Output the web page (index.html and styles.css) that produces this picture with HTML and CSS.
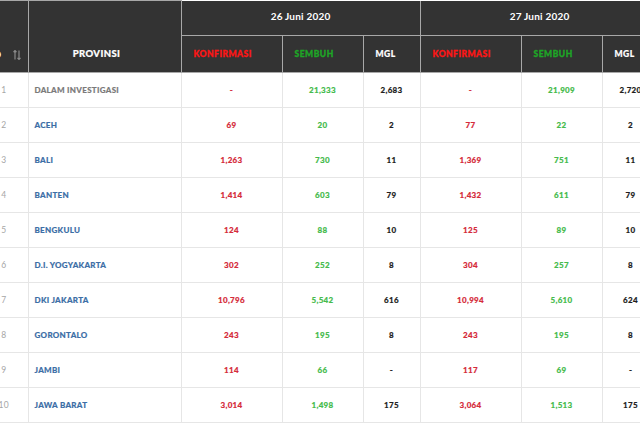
FILE: index.html
```html
<!DOCTYPE html>
<html lang="id">
<head>
<meta charset="utf-8">
<title>Data Provinsi</title>
<link rel="stylesheet" href="styles.css">
</head>
<body>
<div class="wrap">
<table class="data">
  <colgroup>
    <col class="c-no"><col class="c-prov">
    <col class="c-k"><col class="c-s"><col class="c-m">
    <col class="c-k"><col class="c-s"><col class="c-m">
  </colgroup>
  <thead>
    <tr class="h1">
      <th rowspan="2" class="th-no"><span class="no-lbl">NO</span>
        <svg class="sort" width="8" height="10" viewBox="0 0 8 10"><path d="M2 0.5v9M0.5 2.2L2 0.5 3.5 2.2M6 0.5v9M4.5 7.8L6 9.5 7.5 7.8" fill="none" stroke="#8a8a8a" stroke-width="1.2"/></svg>
      </th>
      <th rowspan="2" class="th-prov">PROVINSI</th>
      <th colspan="3" class="th-date">26 Juni 2020</th>
      <th colspan="3" class="th-date">27 Juni 2020</th>
    </tr>
    <tr class="h2">
      <th class="lbl red">KONFIRMASI</th><th class="lbl green">SEMBUH</th><th class="lbl white">MGL</th>
      <th class="lbl red">KONFIRMASI</th><th class="lbl green">SEMBUH</th><th class="lbl white">MGL</th>
    </tr>
  </thead>
  <tbody>
    <tr><td class="no">1</td><td class="prov grey">DALAM INVESTIGASI</td><td class="num k">-</td><td class="num s">21,333</td><td class="num m">2,683</td><td class="num k">-</td><td class="num s">21,909</td><td class="num m">2,720</td></tr>
    <tr><td class="no">2</td><td class="prov">ACEH</td><td class="num k">69</td><td class="num s">20</td><td class="num m">2</td><td class="num k">77</td><td class="num s">22</td><td class="num m">2</td></tr>
    <tr><td class="no">3</td><td class="prov">BALI</td><td class="num k">1,263</td><td class="num s">730</td><td class="num m">11</td><td class="num k">1,369</td><td class="num s">751</td><td class="num m">11</td></tr>
    <tr><td class="no">4</td><td class="prov">BANTEN</td><td class="num k">1,414</td><td class="num s">603</td><td class="num m">79</td><td class="num k">1,432</td><td class="num s">611</td><td class="num m">79</td></tr>
    <tr><td class="no">5</td><td class="prov">BENGKULU</td><td class="num k">124</td><td class="num s">88</td><td class="num m">10</td><td class="num k">125</td><td class="num s">89</td><td class="num m">10</td></tr>
    <tr><td class="no">6</td><td class="prov">D.I. YOGYAKARTA</td><td class="num k">302</td><td class="num s">252</td><td class="num m">8</td><td class="num k">304</td><td class="num s">257</td><td class="num m">8</td></tr>
    <tr><td class="no">7</td><td class="prov">DKI JAKARTA</td><td class="num k">10,796</td><td class="num s">5,542</td><td class="num m">616</td><td class="num k">10,994</td><td class="num s">5,610</td><td class="num m">624</td></tr>
    <tr><td class="no">8</td><td class="prov">GORONTALO</td><td class="num k">243</td><td class="num s">195</td><td class="num m">8</td><td class="num k">243</td><td class="num s">195</td><td class="num m">8</td></tr>
    <tr><td class="no">9</td><td class="prov">JAMBI</td><td class="num k">114</td><td class="num s">66</td><td class="num m">-</td><td class="num k">117</td><td class="num s">69</td><td class="num m">-</td></tr>
    <tr><td class="no">10</td><td class="prov">JAWA BARAT</td><td class="num k">3,014</td><td class="num s">1,498</td><td class="num m">175</td><td class="num k">3,064</td><td class="num s">1,513</td><td class="num m">175</td></tr>
  </tbody>
</table>
</div>
</body>
</html>
```
FILE: styles.css
```css
html, body {
  margin: 0;
  padding: 0;
  background: #ffffff;
}
body {
  width: 640px;
  height: 426px;
  overflow: hidden;
  font-family: Lato, "Liberation Sans", sans-serif;
}
.wrap {
  margin-left: -20px;
  width: 700px;
}
.data {
  border-collapse: collapse;
  table-layout: fixed;
  width: 679px;
}
.c-no { width: 48px; }
.c-prov { width: 153px; }
.c-k { width: 101px; }
.c-s { width: 81px; }
.c-m { width: 57px; }

thead th {
  background: #333333;
  border: 1px solid #a8a8a8;
  color: #ffffff;
  font-weight: 900;
  padding: 0;
}
.h1 { height: 35px; }
.h2 { height: 37px; }
.th-no {
  text-align: right;
  vertical-align: bottom;
  padding: 0 7px 12px 0;
  border-left: none;
  font-size: 9px;
  letter-spacing: 0.6px;
  white-space: nowrap;
}
.th-no .no-lbl { margin-right: 8px; }
.sort { vertical-align: -2px; }
.th-prov {
  vertical-align: bottom;
  padding: 0 16px 13px 0;
  font-size: 9.5px;
  letter-spacing: 0.4px;
  text-align: center;
  -webkit-text-stroke: 0.2px #ffffff;
}
.th-date {
  font-size: 10px;
  font-weight: 700;
  letter-spacing: 0.2px;
  text-align: center;
  vertical-align: middle;
  padding-bottom: 3px;
  border-top: none;
}
.lbl {
  text-align: left;
  padding-left: 12px;
  font-size: 8.5px;
  letter-spacing: 0.5px;
}
.lbl.red { color: #ff1515; -webkit-text-stroke: 0.3px #ff1515; }
.lbl.green { color: #1ea626; -webkit-text-stroke: 0.3px #1ea626; }
.lbl.white { color: #ffffff; -webkit-text-stroke: 0.2px #ffffff; }

tbody tr { height: 35px; }
tbody td {
  border: 1px solid #e6e6e6;
  padding: 0;
  font-size: 8px;
  font-weight: 900;
  letter-spacing: 0.3px;
  -webkit-text-stroke: 0.15px currentColor;
}
tbody tr:first-child td { border-top: none; }
.no {
  text-align: center;
  color: #a6a6a6;
  font-weight: 400;
  border-left: none;
  font-size: 8.5px;
  -webkit-text-stroke: 0;
}
.prov {
  padding-left: 6px;
  color: #3c6ea6;
}
.prov.grey { color: #7a7a7a; }
.num { text-align: center; }
.k { color: #d52b3a; }
.s { color: #45bb4c; }
.m { color: #1e1e1e; }
```
